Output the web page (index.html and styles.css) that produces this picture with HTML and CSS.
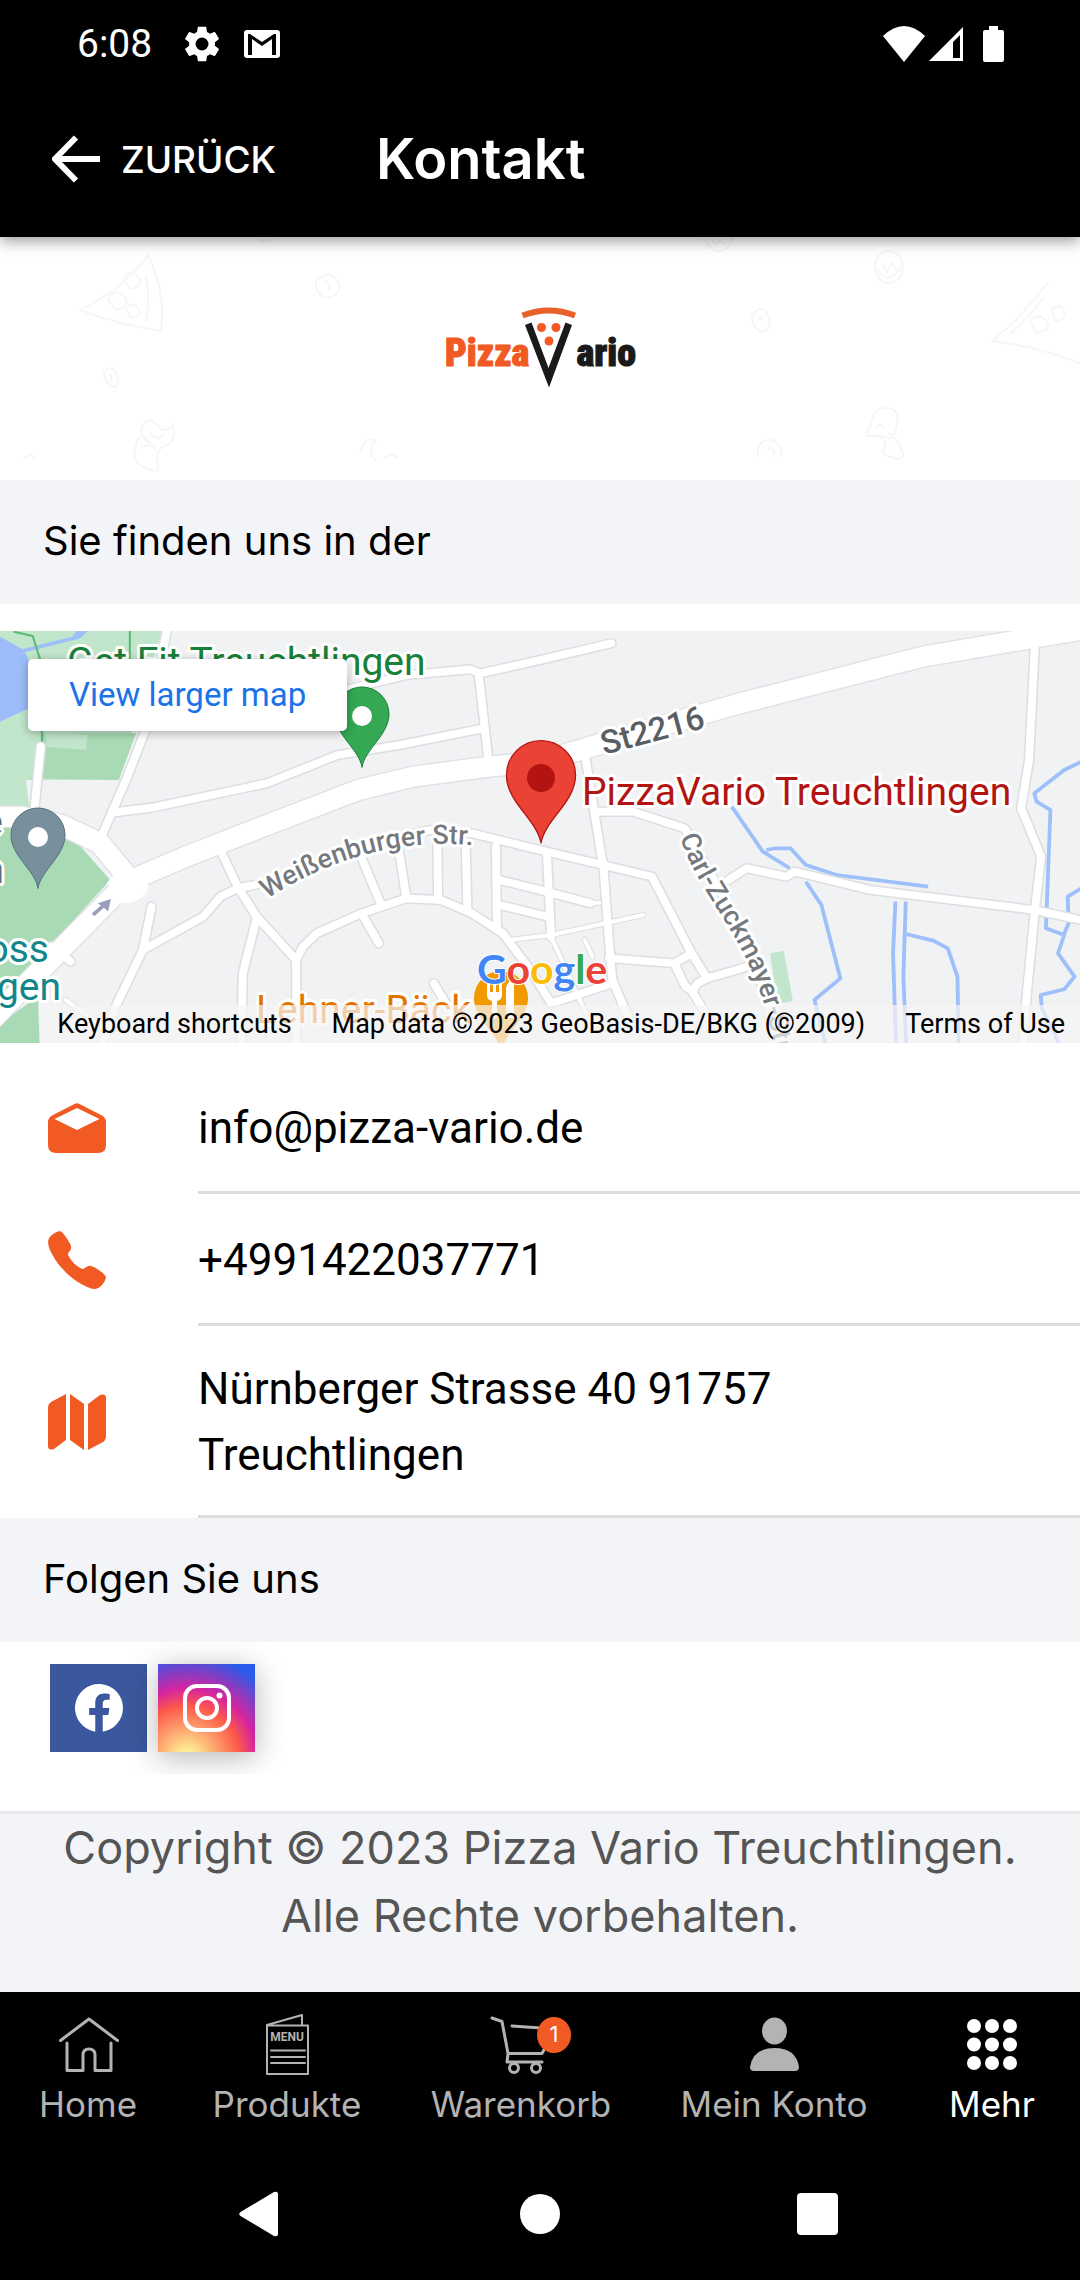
FILE: index.html
```html
<!DOCTYPE html>
<html lang="de">
<head>
<meta charset="utf-8">
<meta name="viewport" content="width=device-width, initial-scale=1">
<title>Kontakt – Pizza Vario</title>
<link rel="stylesheet" href="styles.css">
</head>
<body>
<div class="status-bar">
  <span class="clock">6:08</span>
  <svg class="status-gear" viewBox="2 2 20 20" aria-hidden="true"><path d="M19.14 12.94c.04-.3.06-.61.06-.94s-.02-.64-.07-.94l2.03-1.58a.49.49 0 0 0 .12-.61l-1.92-3.32a.49.49 0 0 0-.59-.22l-2.39.96a7 7 0 0 0-1.62-.94l-.36-2.54a.48.48 0 0 0-.48-.41h-3.84a.47.47 0 0 0-.47.41l-.36 2.54c-.59.24-1.13.57-1.62.94l-2.39-.96a.47.47 0 0 0-.59.22L2.74 8.87a.48.48 0 0 0 .12.61l2.03 1.58a6 6 0 0 0 0 1.88l-2.03 1.58a.49.49 0 0 0-.12.61l1.92 3.32c.12.22.37.29.59.22l2.39-.96c.5.38 1.03.7 1.62.94l.36 2.54c.05.24.24.41.48.41h3.84c.24 0 .44-.17.47-.41l.36-2.54a7 7 0 0 0 1.62-.94l2.39.96c.22.08.47 0 .59-.22l1.92-3.32a.47.47 0 0 0-.12-.61zM12 15.6a3.6 3.6 0 1 1 0-7.2 3.6 3.6 0 0 1 0 7.2z"/></svg>
  <svg class="status-mail" viewBox="0 0 36 28" aria-hidden="true"><path fill-rule="evenodd" d="M3 0H33Q36 0 36 3V25Q36 28 33 28H3Q0 28 0 25V3Q0 0 3 0ZM4 25H8V9L18 16L28 9V25H32V4H30L18 12L6 4H4Z"/></svg>
  <span class="status-signals">
    <svg class="status-wifi" viewBox="0 0 42 36" aria-hidden="true"><path d="M0 10Q21-10 42 10L21 36Z"/></svg>
    <svg class="status-cell" viewBox="0 0 34 34" aria-hidden="true"><path fill-rule="evenodd" d="M34 0V34H0ZM31 8L24 15V31H31Z"/></svg>
    <svg class="status-battery" viewBox="0 0 21 36" aria-hidden="true"><path d="M6 0H15V4H19Q21 4 21 6V34Q21 36 19 36H2Q0 36 0 34V6Q0 4 2 4H6Z"/></svg>
  </span>
</div>

<header class="app-header">
  <button class="back-button" type="button">
    <svg class="back-arrow" viewBox="0 0 48 48" aria-hidden="true"><path d="M48 24H5M24 2.500L3 24L24 45.500"/></svg>
    <span>ZURÜCK</span>
  </button>
  <h1 class="page-title">Kontakt</h1>
</header>

<main>
  <div class="brand">
    <svg class="brand-doodles" viewBox="0 0 1080 243" preserveAspectRatio="xMidYMin slice" aria-hidden="true">
      <path d="M148 18Q166 55 161 94Q120 88 80 73Q124 52 148 18ZM146 38Q150 64 146 84M108 62q8-12 16-3t-8 14zM124 40q8-9 14 0t-8 12zM126 72q8-9 12 0t-8 8z"/>
      <path d="M1048 45Q1020 82 992 104Q1040 110 1084 128M1044 60Q1026 84 1010 97M1030 84q9-9 16 0t-10 12zM1052 72q9-7 12 2t-9 10z"/>
      <path d="M318 42q11-8 18 0t-1 16q-10 6-16-2t-1-14zM324 44q8 2 4 10M257 2q7 5 15 0M704 2q6 12 15 12t14-14M712 2l4 6l4-5l4 5"/>
      <ellipse cx="889" cy="30" rx="14" ry="16"/><path d="M882 27l5 8l4-9l5 6M876 30q12 22 25 0"/>
      <path d="M752 78q10-12 16 0t-6 17q-9-2-10-17zM758 82q4-3 6 2M104 135q6-7 11-1t1 16q-10 0-12-15zM109 137q4 2 2 8"/>
      <path d="M142 190q8-12 15-2t16 0q4 16-7 20t-8 18t-18 2q-8-4-4-20t14-2q-10-4-8-16zM140 210q9-4 16 2M150 196q8 10 14 0"/>
      <path d="M360 215q5-17 16-11q-10 8 0 20M384 222q8-7 14-1M24 222q5-7 12-1M758 220q-2-16 10-17t14 17M768 212q7-4 6 8"/>
      <path d="M870 190q2-18 16-19t11 16t-9 14t-16-2t-2-9zM880 200q8 6 4 12t10 9t6-12t-12-12M876 192q4-8 8 0"/>
    </svg>
    <svg class="brand-logo" viewBox="40 20 200 110" role="img" aria-label="PizzaVario">
      <text class="logo-word logo-orange" x="45" y="96">Pizza</text>
      <text class="logo-word logo-black" x="236" y="96" text-anchor="end">ario</text>
      <path class="logo-black" d="M125 55L131.500 52.500L148.500 98L165.500 52.500L172 55L149 117.500Z"/>
      <path class="logo-crust" d="M122.500 45.500Q149 35.500 175 45.500"/>
      <g class="logo-orange"><circle cx="141.500" cy="57.500" r="4.500"/><circle cx="156" cy="57.500" r="4.500"/><circle cx="149" cy="71" r="4.500"/></g>
    </svg>
  </div>

  <h2 class="section-title">Sie finden uns in der</h2>

  <section class="map" aria-label="Karte">
    <svg class="map-canvas" viewBox="0 0 1080 412" preserveAspectRatio="xMidYMid slice" aria-hidden="true">
      <defs>
        <path id="pin" d="M0 0C-3-18-27-32-27-53A27 27 0 0 1 27-53C27-32 3-18 0 0Z"/>
        <g id="wide-roads"><path d="M-20 1195L180 985L370 785L540 710L800 605L1040 510L1200 470L1420 440L1568 425L1700 385L2130 255L2680 110L3160 25"/><path d="M-20 590L60 590L180 615L290 670L370 770L375 810"/></g>
        <g id="roads">
          <path d="M487 20L430 310L370 470L290 660"/>
          <path d="M325 578L440 563L775 490L980 405L1160 375L1405 325"/>
          <path d="M1010 208L1180 165L1365 148L1395 160L1568 120L1775 70"/>
          <path d="M1390 160L1420 440"/><path d="M118 380L98 590"/>
          <path d="M635 680L690 800L745 890L860 1020L860 1290"/><path d="M745 895L705 1060L700 1290"/>
          <path d="M690 805L640 830L590 890L415 990L340 1150L290 1290"/><path d="M440 860L415 990"/><path d="M150 980L205 1025"/>
          <path d="M690 805L765 790L920 735L1100 665L1250 630L1370 640L1568 690L1893 770L2008 1000L2053 1075L2025 1090L2010 1115L2060 1200"/>
          <path d="M860 1020L880 980L920 940L1050 880L1180 835L1280 840L1370 880L1460 940L1540 1050L1600 1150L1778 1090"/>
          <path d="M1040 690L1105 850M1155 670L1180 835M1270 660L1272 840M1352 665L1357 870M1440 680L1443 930"/>
          <path d="M1450 780L1568 810L1715 850M1450 855L1590 890M1050 880L1100 970M1260 1090L1300 1160"/>
          <path d="M1698 400L1723 560L1753 750L1768 960L1778 1080L1840 1230"/><path d="M1728 575L1838 575L1988 625L2068 770L2188 1000L2260 1290"/>
          <path d="M2115 780L2168 745L2283 770L2308 755L2528 810L3003 870L3160 905"/>
          <path d="M3005 70L2988 420L2965 565L3023 710L3005 870L2978 1160L2970 1290"/>
          <path d="M1588 700L1600 950M1768 1015L1958 1030L2008 1000M1958 1030L1990 1100L2010 1112M2053 1075L2170 1040"/>
        </g>
        <g id="lanes"><path d="M1480 960L1600 945L1868 885M1600 950L1648 1060L1710 1200M1698 960L1720 1010M190 1140L300 1220M1715 850L1740 848"/></g>
        <path id="weissenburger" d="M267 268Q376 198 494 217"/>
        <path id="zuckmayer" d="M680 206C704 280 762 310 778 440"/>
      </defs>
      <g transform="scale(.3444 .3333) translate(0 -33)">
        <path fill="#c1e6cb" d="M0 33H470L340 480L75 480L85 560L0 570Z"/>
        <path fill="#a8dab5" d="M120 340H395L345 480L90 475L120 390Z"/><path fill="#c1e6cb" d="M130 335L255 345L250 390L135 380Z"/>
        <path fill="#a8dab5" d="M0 610L200 640L320 780L30 1110L0 1140ZM0 1210L110 1130L115 1270H0Z"/>
        <path fill="#9cbdf9" d="M0 50L70 90L85 125V265L0 305Z"/>
        <path class="water" d="M65 93L230 50L250 30M215 50L235 30"/>
        <path class="trail" d="M40 35L95 48L120 130L122 380M377 33V180"/>
        <path fill="#c1e6cb" d="M2236 1000L2276 993L2302 1142L2258 1152Z"/>
        <path class="water" d="M2125 560L2215 695L2293 745M2225 690L2250 685H2295L2340 735L2430 765L2695 800M2340 785L2385 855L2440 1075L2365 1140L2380 1200L2400 1290M2600 845L2593 1000L2602 1290M2630 845L2623 1070L2632 1290M2633 943L2710 962L2752 985L2780 1070L2784 1290M3140 425L3090 450L3003 520L3010 545L3050 570L3037 925L3090 945L3072 1000L3120 1070L3090 1108L3022 1125L3025 1165L3080 1280M3140 805L3100 830L3103 910L3088 945"/>
        <use href="#wide-roads" class="wide-case"/><use href="#roads" class="road-case"/>
        <use href="#lanes" class="lane-case"/><use href="#lanes" class="lane"/>
        <use href="#roads" class="road-fill"/><use href="#wide-roads" class="wide-fill"/>
        <path fill="#fff" d="M310 790Q370 700 430 790Q430 850 350 850Z"/>
        <path fill="none" stroke="#9aa0bb" stroke-width="11" d="M270 885L308 850"/><path fill="#9aa0bb" d="M322 837L284 850L314 874Z"/>
      </g>
      <g fill="#188038" class="place"><text x="67" y="44">Get Fit Treuchtlingen</text></g>
      <g fill="#12868a" class="place"><text x="49" y="331" text-anchor="end">oss</text><text x="61" y="369" text-anchor="end">gen</text></g>
      <g fill="#5f6d78" class="place"><text x="3" y="204" text-anchor="end">e</text><text x="4" y="252" text-anchor="end">n</text></g>
      <text class="place" fill="#e37400" x="256" y="392">Lehner-Bäck</text>
      <text class="street"><textPath href="#weissenburger">Weißenburger Str.</textPath></text>
      <text class="street"><textPath href="#zuckmayer">Carl-Zuckmayer-Str.</textPath></text>
      <text class="street route" transform="translate(604 124) rotate(-15)">St2216</text>
      <g transform="translate(362 136)"><use href="#pin" fill="#34a853" stroke="#188038"/><circle cy="-51" r="10" fill="#fff"/></g>
      <g transform="translate(38 257)"><use href="#pin" fill="#78909c" stroke="#546e7a"/><circle cy="-51" r="10" fill="#fff"/></g>
      <g transform="translate(501 420)"><use href="#pin" fill="#f29900"/><path fill="#fff" d="M-14-68h3v9h3v-9h3v9h3v-9h3v12q0 5-5 6v17h-5v-17q-5-1-5-6zM5-33v-30q2-8 8-8v38z"/></g>
      <g transform="translate(541 212)"><use href="#pin" transform="scale(1.280)" fill="#ea4335" stroke="#b31412"/><circle cy="-65" r="14" fill="#b31412"/></g>
      <text class="place" fill="#b31412" x="582" y="174">PizzaVario Treuchtlingen</text>
      <text class="google" x="477" y="353"><tspan fill="#4285f4">G</tspan><tspan fill="#ea4335">o</tspan><tspan fill="#fbbc04">o</tspan><tspan fill="#4285f4">g</tspan><tspan fill="#34a853">l</tspan><tspan fill="#ea4335">e</tspan></text>
    </svg>
    <a class="map-link" href="#map">View larger map</a>
    <div class="map-credits">
      <button class="map-credit" type="button">Keyboard shortcuts</button>
      <span class="map-credit">Map data ©2023 GeoBasis-DE/BKG (©2009)</span>
      <a class="map-credit" href="#terms">Terms of Use</a>
    </div>
  </section>

  <address class="contacts">
    <a class="contact" href="mailto:info@pizza-vario.de">
      <svg class="contact-icon" viewBox="0 0 66 66" aria-hidden="true"><path fill-rule="evenodd" d="M30.500 9Q33 7.500 35.500 9L58 20.500Q62 23 62 27V50Q62 58 54 58H12Q4 58 4 50V27Q4 23 8 20.500ZM33 13L10.500 24L33 35L55.500 24Z"/></svg>
      <span class="contact-text">info@pizza-vario.de</span>
    </a>
    <a class="contact" href="tel:+4991422037771">
      <svg class="contact-icon" viewBox="0 0 512 512" aria-hidden="true"><path d="M391 480c-19.520 0-46.940-7.060-88-30-49.930-28-88.550-53.850-138.210-103.380C116.910 298.770 93.610 267.790 61 208.450c-36.840-67-30.560-102.120-23.540-117.130C45.820 73.380 58.160 62.650 74.110 52a176.300 176.300 0 0 1 28.640-15.200c1-.43 1.930-.84 2.760-1.210 4.950-2.230 12.450-5.600 21.950-2 6.340 2.380 12 7.250 20.860 16 18.170 17.920 43 57.830 52.160 77.430 6.150 13.210 10.220 21.930 10.230 31.710 0 11.450-5.760 20.280-12.750 29.810-1.310 1.790-2.610 3.500-3.870 5.160-7.610 10-9.280 12.890-8.180 18.050 2.230 10.370 18.860 41.240 46.190 68.510s57.310 42.850 67.720 45.070c5.380 1.150 8.330-.59 18.650-8.470 1.480-1.130 3-2.300 4.590-3.470 10.660-7.930 19.080-13.540 30.260-13.540h.06c9.730 0 18.060 4.220 31.860 11.180 18 9.080 59.110 33.590 77.140 51.780 8.770 8.840 13.660 14.480 16.050 20.810 3.600 9.530.21 17-2 22-.37.83-.78 1.740-1.210 2.750a176.490 176.490 0 0 1-15.290 28.580c-10.630 15.900-21.400 28.210-39.380 36.580A67.420 67.420 0 0 1 391 480z"/></svg>
      <span class="contact-text">+4991422037771</span>
    </a>
    <a class="contact" href="#map">
      <svg class="contact-icon" viewBox="0 0 66 66" aria-hidden="true"><path d="M22 5V51L10 60Q4 62 4 57V19Q4 15 7 13ZM26 5L40 15V61L26 51ZM44 15L56 6Q62 4 62 9V47Q62 51 59 53L44 61Z"/></svg>
      <span class="contact-text">Nürnberger Strasse 40 91757 Treuchtlingen</span>
    </a>
  </address>

  <h2 class="section-title">Folgen Sie uns</h2>

  <div class="social">
    <a class="social-link facebook" href="#facebook" aria-label="Facebook">
      <svg class="social-icon" viewBox="0 0 48 48" aria-hidden="true"><path d="M48 24a24 24 0 1 0-27.750 23.700V30.900h-6.100V24h6.100v-5.300c0-6 3.600-9.300 9.100-9.300 2.600 0 5.300.5 5.300.5v5.900h-3c-3 0-3.900 1.800-3.900 3.700V24h6.700l-1.100 6.900h-5.600v16.800A24 24 0 0 0 48 24z"/></svg>
    </a>
    <a class="social-link instagram" href="#instagram" aria-label="Instagram">
      <svg class="social-icon social-outline" viewBox="0 0 48 48" aria-hidden="true"><rect x="2" y="2" width="44" height="44" rx="12"/><circle cx="24" cy="24" r="10"/><circle class="social-dot" cx="36.500" cy="11.500" r="3"/></svg>
    </a>
  </div>
</main>

<footer class="copyright">Copyright © 2023 Pizza Vario Treuchtlingen. Alle Rechte vorbehalten.</footer>

<nav class="tabs" aria-label="Hauptmenü">
  <a class="tab" href="#home">
    <svg class="tab-icon" viewBox="0 0 64 64" aria-hidden="true"><path class="line" d="M4.500 28.500L33 7L61.500 28.500M11 31V58.500H27V43Q27 37 33 37T39 43V58.500H55V31"/></svg>
    <span>Home</span>
  </a>
  <a class="tab" href="#produkte">
    <svg class="tab-icon" viewBox="0 0 64 64" aria-hidden="true"><path class="line thin" d="M12 13.500H53V62H12ZM12 13L47 3V13M16 38.500H50M16 45H50M16 51H50"/><text class="menu-word" x="32" y="29" text-anchor="middle">MENU</text></svg>
    <span>Produkte</span>
  </a>
  <a class="tab" href="#warenkorb">
    <span class="tab-cart">
      <svg class="tab-icon" viewBox="0 0 64 64" aria-hidden="true"><path class="line" d="M3 6L13 9.500L19 41.500H53L57 34M23 14L52 16M19 42L18 50H53"/><circle class="line" cx="25" cy="56" r="4.500"/><circle class="line" cx="47" cy="56" r="4.500"/></svg>
      <span class="badge">1</span>
    </span>
    <span>Warenkorb</span>
  </a>
  <a class="tab" href="#konto">
    <svg class="tab-icon" viewBox="0 0 64 64" aria-hidden="true"><ellipse cx="32.500" cy="19" rx="12.500" ry="13.500"/><path d="M8 55Q11 36 32.500 36T57 55Q57 59 53 59H12Q8 59 8 55Z"/></svg>
    <span>Mein Konto</span>
  </a>
  <a class="tab tab-active" href="#mehr" aria-current="page">
    <svg class="tab-icon" viewBox="0 0 64 64" aria-hidden="true"><circle cx="14" cy="14" r="7"/><circle cx="32" cy="14" r="7"/><circle cx="50" cy="14" r="7"/><circle cx="14" cy="32.500" r="7"/><circle cx="32" cy="32.500" r="7"/><circle cx="50" cy="32.500" r="7"/><circle cx="14" cy="51" r="7"/><circle cx="32" cy="51" r="7"/><circle cx="50" cy="51" r="7"/></svg>
    <span>Mehr</span>
  </a>
</nav>

<div class="system-nav">
  <button class="system-button" type="button" aria-label="Zurück"><svg class="system-icon" viewBox="0 0 46 46" aria-hidden="true"><path d="M3.500 21L37 1Q41 0 41 3V43Q41 46 37 45L3.500 25Q1 23 3.500 21Z"/></svg></button>
  <button class="system-button" type="button" aria-label="Startbildschirm"><svg class="system-icon" viewBox="0 0 46 46" aria-hidden="true"><circle cx="23" cy="23" r="20"/></svg></button>
  <button class="system-button" type="button" aria-label="Letzte Apps"><svg class="system-icon" viewBox="0 0 46 46" aria-hidden="true"><rect x="0" y="2" width="41" height="42" rx="4"/></svg></button>
</div>
</body>
</html>
```
FILE: styles.css
```css
:root {
  --orange: #f15a22;
  --band: #f3f4f8;
  --muted: #b3b3b3;
  --display: Inter, "Noto Sans", sans-serif;
  --body: Roboto, "Liberation Sans", sans-serif;
}

* { box-sizing: border-box; }

body {
  margin: 0;
  min-height: 100vh;
  display: flex;
  flex-direction: column;
  background: #fff;
  color: #000;
  font-family: var(--body);
}

a { color: inherit; text-decoration: none; }

button {
  margin: 0;
  padding: 0;
  border: 0;
  background: none;
  color: inherit;
  font: inherit;
}

svg { display: block; flex: none; }

/* Status bar */
.status-bar {
  display: flex;
  align-items: center;
  height: 88px;
  padding: 0 76px 0 77px;
  background: #000;
  color: #fff;
  fill: currentColor;
  font-size: 39px;
}
.clock { margin-right: 32px; }
.status-gear { width: 36px; height: 36px; }
.status-mail { width: 36px; height: 28px; margin-left: 24px; }
.status-signals { display: flex; align-items: center; margin-left: auto; }
.status-wifi { width: 42px; height: 36px; }
.status-cell { width: 34px; height: 34px; margin: 0 20px 0 4px; }
.status-battery { width: 21px; height: 36px; }

/* Header */
.app-header {
  position: relative;
  z-index: 1;
  display: flex;
  align-items: center;
  gap: 100px;
  height: 149px;
  padding: 0 52px 7px;
  background: #000;
  box-shadow: 0 4px 14px rgba(0, 0, 0, .4);
  color: #fff;
  font-family: var(--display);
}
.back-button {
  display: flex;
  align-items: center;
  gap: 21px;
  font-size: 37px;
  font-weight: 500;
}
.back-arrow {
  width: 48px;
  height: 48px;
  fill: none;
  stroke: #fff;
  stroke-width: 6;
}
.page-title { margin: 0; font-size: 56px; font-weight: 600; }

/* Brand */
.brand {
  display: grid;
  justify-items: center;
  height: 243px;
}
.brand-doodles,
.brand-logo { grid-area: 1 / 1; }
.brand-doodles {
  width: 100%;
  height: 243px;
  fill: none;
  stroke: #f6f6f6;
  stroke-width: 2;
}
.brand-logo { width: 200px; height: 110px; margin-top: 53px; }
.logo-word {
  font: 900 38px "Roboto Condensed", "Open Sans Condensed", Lato, sans-serif;
  stroke-width: 1;
}
.logo-orange { fill: var(--orange); stroke: var(--orange); }
.logo-black { fill: #1a1a1a; stroke: #1a1a1a; }
.logo-orange circle, path.logo-black { stroke: none; }
.logo-crust { fill: none; stroke: #e8612a; stroke-width: 6; }

.section-title {
  margin: 0;
  padding: 31px 43px 33px;
  background: var(--band);
  font: 400 40px/60px var(--display);
}

/* Map */
.map {
  position: relative;
  height: 412px;
  margin-top: 27px;
  overflow: hidden;
  background: #f1f2f4;
}
.map-canvas { width: 100%; height: 412px; stroke-linejoin: round; }
.map-canvas use { stroke-linecap: round; }
.wide-case { fill: none; stroke: #dfe1e4; stroke-width: 68; }
.wide-fill { fill: none; stroke: #fff; stroke-width: 60; }
.road-case { fill: none; stroke: #dcdee1; stroke-width: 32; }
.road-fill { fill: none; stroke: #fff; stroke-width: 23; }
.lane-case { fill: none; stroke: #dcdee1; stroke-width: 18; }
.lane { fill: none; stroke: #fff; stroke-width: 12; }
.water { fill: none; stroke: #9dbffa; stroke-width: 11; }
.trail { fill: none; stroke: #5bb974; stroke-width: 6; }
.place, .street {
  font: 400 39px var(--body);
  stroke: #fff;
  stroke-width: 6;
  paint-order: stroke;
}
.street { font-size: 27px; font-weight: 500; fill: #75797e; }
.route { font-size: 33px; fill: #5a5d61; }
.google {
  font: 700 41px Lato, sans-serif;
  stroke: #fff;
  stroke-width: 2;
  paint-order: stroke;
}
.map-link {
  position: absolute;
  top: 28px;
  left: 28px;
  padding: 0 41px;
  border-radius: 5px;
  background: #fff;
  box-shadow: 0 2px 10px rgba(0, 0, 0, .3);
  color: #1a73e8;
  font-size: 33px;
  line-height: 72px;
}
.map-credits {
  position: absolute;
  right: 0;
  bottom: 0;
  display: flex;
  gap: 40px;
  padding: 0 15px;
  background: rgba(245, 245, 245, .7);
  font-size: 27px;
  line-height: 38px;
  white-space: nowrap;
}

/* Contact list */
.contacts { padding-top: 19px; font-style: normal; }
.contact {
  display: flex;
  align-items: center;
  gap: 88px;
  padding-left: 44px;
  font-size: 44px;
  line-height: 66px;
}
.contact-icon { width: 66px; height: 66px; fill: var(--orange); }
.contact-text {
  flex: 1;
  padding: 30px 300px 27px 0;
  border-bottom: 3px solid #dcdcdc;
}
.contact:not(:last-child) .contact-text { padding-top: 33px; padding-bottom: 30px; }

/* Social links */
.social {
  display: flex;
  gap: 11px;
  height: 132px;
  padding: 22px 50px;
  overflow: hidden;
}
.social-link {
  display: grid;
  place-items: center;
  width: 97px;
  height: 88px;
}
.facebook { background: #3b589e; }
.instagram {
  background: radial-gradient(circle at 30% 107%, #fdf497 0%, #fdf497 5%, #fd5949 45%, #d6249f 60%, #285aeb 90%);
  box-shadow: 0 5px 30px rgba(0, 0, 0, .3);
}
.social-icon { width: 48px; height: 48px; fill: #fff; }
.social-outline { fill: none; stroke: #fff; stroke-width: 4; }
.social-dot { fill: #fff; stroke: none; }

/* Footer */
.copyright {
  flex: 1;
  margin-top: 37px;
  padding: 0 60px 40px;
  border-top: 3px solid #e8e9ec;
  background: var(--band);
  color: #555;
  font: 400 45px/68px var(--display);
  text-align: center;
}

/* Tab bar */
.tabs {
  display: grid;
  grid-template-columns: 176fr 222fr 246fr 260fr 176fr;
  height: 168px;
  padding-top: 20px;
  background: #000;
  color: var(--muted);
  font: 400 35px/56px var(--display);
}
.tab { display: flex; flex-direction: column; align-items: center; }
.tab-active { color: #fff; }
.tab-icon { width: 64px; height: 64px; fill: currentColor; }
.tab-icon .line {
  fill: none;
  stroke: currentColor;
  stroke-width: 3;
  stroke-linecap: round;
  stroke-linejoin: round;
}
.tab-icon .thin { stroke-width: 2; }
.menu-word { font: bold 12px var(--body); }
.tab-cart { position: relative; }
.badge {
  position: absolute;
  top: 5px;
  right: -18px;
  width: 34px;
  height: 36px;
  border-radius: 50%;
  background: var(--orange);
  color: #fff;
  font: 400 22px/35px var(--display);
  text-align: center;
}

/* System navigation */
.system-nav {
  display: grid;
  grid-template-columns: repeat(3, 1fr);
  height: 120px;
  padding: 0 120px 12px;
  background: #000;
}
.system-button { display: grid; place-items: center; }
.system-icon { width: 46px; height: 46px; fill: #fff; }
```
